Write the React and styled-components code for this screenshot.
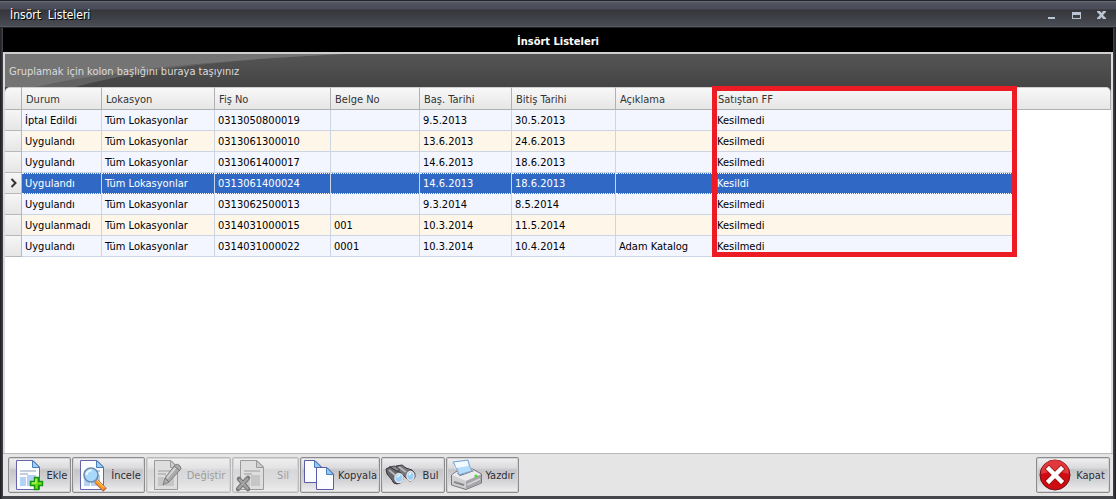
import React from "react";
import styled, { createGlobalStyle, css } from "styled-components";

const GlobalStyle = createGlobalStyle`
  * { box-sizing: border-box; }
  body {
    margin: 0;
    font-family: Tahoma, "DejaVu Sans Condensed", "Noto Sans", sans-serif;
    font-size: 11px;
    line-height: 14px;
    color: #000;
  }
  button { font: inherit; }
`;

const Window = styled.div`
  display: flex;
  flex-direction: column;
  min-height: 100vh;
  padding: 0 3px 3px;
  background: linear-gradient(90deg, #1c1d21, #44464c 3px, #44464c calc(100% - 3px), #1c1d21);
`;

const TitleBar = styled.header`
  display: flex;
  align-items: center;
  justify-content: space-between;
  height: 28px;
  margin: 0 -3px;
  padding: 1px 7px 0 10px;
  border-top: 1px solid #23242b;
  border-bottom: 1px solid #23242b;
  background: linear-gradient(#6c6e78 0, #50525f 2px, #4a4b58 8px, #35363a 9px, #4a4c54 25px, #666872 26px);
`;

const WindowTitle = styled.span`
  color: #fff;
  font-size: 12px;
  white-space: pre;
  text-shadow: 1px 1px 0 #000;
`;

const WindowControls = styled.div`
  display: flex;
  gap: 9px;
`;

const WindowButton = styled.button`
  display: flex;
  width: 16px;
  height: 16px;
  padding: 0;
  border: 0;
  background: none;
`;

const Banner = styled.h1`
  height: 24px;
  margin: 0;
  background: #000;
  color: #fff;
  font-size: 11px;
  font-weight: bold;
  line-height: 27px;
  text-align: center;
`;

const GridPanel = styled.main`
  flex: 1;
  display: flex;
  flex-direction: column;
  border: 2px solid #dcdada;
  border-top-color: #d0cdcd;
  border-bottom: 0;
  background: #fff;
`;

const GroupPanel = styled.div`
  position: relative;
  height: 33px;
  padding: 0 4px;
  background: linear-gradient(#555, #444);
  color: #dcdcdc;
  line-height: 36px;
`;

const GroupShine = styled.svg`
  position: absolute;
  inset: 0 auto auto 0;
`;

const GroupHint = styled.span`
  position: relative;
`;

const TableWrap = styled.div`
  position: relative;
  background: linear-gradient(#444, #444) top / 100% 8px no-repeat;
`;

const Table = styled.table`
  width: 100%;
  table-layout: fixed;
  border-collapse: separate;
  border-spacing: 0;
`;

const HeadCell = styled.th`
  height: 23px;
  padding: 2px 4px 0;
  border: solid #b0b0b0;
  border-width: 1px 1px 1px 0;
  border-top-color: #cfcfcf;
  background: linear-gradient(#f8f8f8, #e6e6e6);
  color: #333;
  font-weight: normal;
  text-align: left;
  white-space: nowrap;
  &:first-child { border-top-left-radius: 5px; }
  &:last-child { border-top-right-radius: 5px; }
`;

const Indicator = styled.td`
  height: 21px;
  padding: 0 0 0 5px;
  border: solid #b8b8b8;
  border-width: 0 1px 1px 0;
  background: linear-gradient(#f6f6f6, #e6e6e6);
  svg { display: block; }
`;

const Cell = styled.td`
  height: 21px;
  padding: 2px 3px 0;
  border: solid #cbd5e4;
  border-width: 0 1px 1px 0;
  white-space: nowrap;
`;

const Filler = styled.td`
  padding: 0;
  background: #fff;
`;

const Row = styled.tr`
  ${Cell} {
    background: ${(p) => (p.$alternate ? "#fff6ea" : "#f3f5ff")};
  }
  ${(p) =>
    p.$selected &&
    css`
      ${Cell} {
        padding-top: 0;
        background: #3069c5;
        color: #fff;
        border-top: 1px dotted #fff;
        border-bottom: 1px dotted #fff;
      }
    `}
`;

const Highlight = styled.div`
  position: absolute;
  top: -1px;
  bottom: 0;
  left: 707px;
  width: 305px;
  border: 5px solid #ed1c24;
  pointer-events: none;
`;

const Toolbar = styled.footer`
  display: flex;
  gap: 1px;
  padding: 3px 3px 3px 5px;
  border-top: 1px solid #b8b8b8;
  background: #e5e5e5;
`;

const Spacer = styled.div`
  flex: 1;
`;

const ToolButton = styled.button`
  display: flex;
  align-items: center;
  width: ${(p) => p.$width}px;
  height: 36px;
  padding: 0;
  border: 1px solid #8c8c8f;
  border-radius: 2px;
  background: linear-gradient(#f0f0f1, #dadadc 10px, #c5c5c8 12px, #d6d6d8 24px, #f0f0f1);
  box-shadow: inset 0 0 0 1px #d4d4d6;
  color: #2c2c36;
  &:disabled {
    border-color: #bababc;
    background: linear-gradient(#f0f0f0, #e3e3e4 10px, #d7d7d9 12px, #dfdfe0 24px, #eee);
    color: #9c9c9c;
  }
  svg { flex: none; margin: -1px 0 -1px -1px; }
`;

const ToolLabel = styled.span`
  flex: 1;
  padding-top: 2px;
  text-align: center;
`;

const Icon = ({ children }) => (
  <svg width="36" height="36" viewBox="0 0 36 36" aria-hidden="true">
    {children}
  </svg>
);

const Page = ({ gray }) => {
  const line = gray ? "#9b9b9b" : "#6767a8";
  return (
    <g>
      <path d="M8.500 3.500H25L31.500 10V32.500H8.500Z" fill={gray ? "#dedede" : "#fbfcff"} stroke={line} />
      <path d="M24.500 3.500V10.500H31.500Z" fill={gray ? "#ccc" : "#9ed0f7"} stroke={gray ? line : "#4a7dba"} />
      <path d="M12 14h16M12 17h8" stroke={gray ? "#bdbdbd" : "#c3cddb"} strokeWidth="2" />
      <path d="M12 20h6v9h-6zM19 18h9v11h-9z" fill={gray ? "#c6c6c6" : "#b4d3f4"} />
    </g>
  );
};

const AddIcon = () => (
  <Icon>
    <Page />
    <path d="M26.500 20.500h4v4h4v4h-4v4h-4v-4h-4v-4h4z" fill="#70e018" stroke="#15940f" strokeWidth="1.400" />
    <path d="M28 22v4h-4" fill="none" stroke="#c6ff80" />
  </Icon>
);

const InspectIcon = () => (
  <Icon>
    <Page />
    <path d="M24 24l9 9" stroke="#b96745" strokeWidth="5" />
    <path d="M24 24l8 8" stroke="#ff9a24" strokeWidth="3" />
    <path d="M24.500 22.500l8 8" stroke="#ffd875" />
    <circle cx="19" cy="18" r="7" fill="#a8d8fa" stroke="#6c8dad" strokeWidth="1.600" />
    <path d="M14.500 18a4.500 4.500 0 0 1 5-4.500" fill="none" stroke="#effaff" strokeWidth="2" />
  </Icon>
);

const EditIcon = () => (
  <Icon>
    <Page gray />
    <path d="M17 28l2-7L29 8q3-2 5 1t0 4L23 25z" fill="#aaa" stroke="#808080" />
    <path d="M21 21L30 10" stroke="#d0d0d0" strokeWidth="2" />
    <path d="M28 9l5 4M19 21l4 4" stroke="#777" />
  </Icon>
);

const DeleteIcon = () => (
  <Icon>
    <Page gray />
    <path d="M7 22l9 10M16 21L6 32" stroke="#777" strokeWidth="4.500" strokeLinecap="round" />
    <path d="M7 22l9 10M16 21L6 32" stroke="#a2a2a2" strokeWidth="2.500" />
  </Icon>
);

const CopyIcon = () => (
  <Icon>
    {[[4, 3], [16, 10]].map(([x, y]) => (
      <g key={x} transform={`translate(${x} ${y})`}>
        <path d="M.5.500H11L17.500 7V22.500H.5Z" fill="#fbfcff" stroke="#5b5ba8" />
        <path d="M10.500.500V7.500H17.500Z" fill="#8fcaf5" stroke="#4a7dba" />
      </g>
    ))}
  </Icon>
);

const FindIcon = () => (
  <Icon>
    <path d="M15 9l6-1 4 3 6 2q4 3 3 7-2 5-6 4l-6-6-6-4z" fill="#77777b" stroke="#3a3a3e" />
    <path d="M18 10l7 5" stroke="#b9b9bd" strokeWidth="2" />
    <path d="M8 10l6-1 5 4-6 3z" fill="#8b8b8f" stroke="#4a4a4e" />
    <path d="M5 12l4-2 5 3 6 3q3 3 2 7-2 4-6 4-4 0-5-4l-5-6z" fill="#68686c" stroke="#37373b" />
    <path d="M8 13l6 5" stroke="#b4b4b8" strokeWidth="2" />
    <ellipse cx="18" cy="21" rx="4" ry="4.500" fill="#9acffa" stroke="#e3e3e8" strokeWidth="1.500" />
    <ellipse cx="29.500" cy="19" rx="3.500" ry="4.500" fill="#9acffa" stroke="#e3e3e8" strokeWidth="1.500" />
    <path d="M16 20l3-2M28 18l2-2" stroke="#effaff" strokeWidth="1.500" />
  </Icon>
);

const PrintIcon = () => (
  <Icon>
    <path d="M5.500 18l7-5 14-1 9 5v9L20 32.500 5.500 28z" fill="#cfcfd1" stroke="#77777a" />
    <path d="M6 18l7-4.500 13-1 9 5L20 24z" fill="#ececee" />
    <path d="M20 24v8l15-6.500V17.500z" fill="#a5a5a9" />
    <path d="M11 16l14-3 3 1-14 5z" fill="#66666a" />
    <path d="M7 5l15-2q1 6 4 11l-13 4Q11 10 7 5z" fill="#b3dcfb" stroke="#7ca3cf" />
    <path d="M8.500 5.500l13-1.500 1 5-12 2z" fill="#f3faff" />
    <path d="M8 25l10 3" stroke="#8a8a8e" strokeWidth="2" />
    <path d="M21 28l13-6" stroke="#d6d6d9" strokeWidth="1.500" />
    <circle cx="30" cy="19" r="1.600" fill="#4fd62f" />
  </Icon>
);

const CloseIcon = () => (
  <Icon>
    <circle cx="19" cy="18" r="15" fill="#cf0c12" stroke="#6e1114" />
    <path d="M5 17a14 14 0 0 1 28 0q-14-5-28 0z" fill="#e0383c" />
    <path d="M13 12l12 12M25 12L13 24" stroke="#8f1013" strokeWidth="6" strokeLinecap="square" />
    <path d="M13 12l12 12M25 12L13 24" stroke="#fff" strokeWidth="4.500" strokeLinecap="square" />
  </Icon>
);

const columns = [
  ["Durum", 80],
  ["Lokasyon", 113],
  ["Fiş No", 116],
  ["Belge No", 89],
  ["Baş. Tarihi", 92],
  ["Bitiş Tarihi", 104],
  ["Açıklama", 98],
  ["Satıştan FF", 303],
];

const rows = [
  ["İptal Edildi", "0313050800019", "", "9.5.2013", "30.5.2013", "", "Kesilmedi"],
  ["Uygulandı", "0313061300010", "", "13.6.2013", "24.6.2013", "", "Kesilmedi"],
  ["Uygulandı", "0313061400017", "", "14.6.2013", "18.6.2013", "", "Kesilmedi"],
  ["Uygulandı", "0313061400024", "", "14.6.2013", "18.6.2013", "", "Kesildi"],
  ["Uygulandı", "0313062500013", "", "9.3.2014", "8.5.2014", "", "Kesilmedi"],
  ["Uygulanmadı", "0314031000015", "001", "10.3.2014", "11.5.2014", "", "Kesilmedi"],
  ["Uygulandı", "0314031000022", "0001", "10.3.2014", "10.4.2014", "Adam Katalog", "Kesilmedi"],
].map(([status, ...rest]) => [status, "Tüm Lokasyonlar", ...rest]);

const selectedRow = 3;

const actions = [
  { label: "Ekle", icon: AddIcon, width: 63 },
  { label: "İncele", icon: InspectIcon, width: 73 },
  { label: "Değiştir", icon: EditIcon, width: 85, disabled: true },
  { label: "Sil", icon: DeleteIcon, width: 67, disabled: true },
  { label: "Kopyala", icon: CopyIcon, width: 80 },
  { label: "Bul", icon: FindIcon, width: 64 },
  { label: "Yazdır", icon: PrintIcon, width: 73 },
];

export default function App() {
  return (
    <Window>
      <GlobalStyle />
      <TitleBar>
        <WindowTitle>{"İnsört  Listeleri"}</WindowTitle>
        <WindowControls>
          <WindowButton aria-label="Simge durumuna küçült">
            <svg width="16" height="16"><path d="M5 10h7v2H5z" fill="#b9c5d0" /></svg>
          </WindowButton>
          <WindowButton aria-label="Ekranı kapla">
            <svg width="16" height="16"><path fillRule="evenodd" d="M4 5h9v7H4zM5 8v3h7V8z" fill="#b9c5d0" /></svg>
          </WindowButton>
          <WindowButton aria-label="Pencereyi kapat">
            <svg width="16" height="16"><path d="M4 4h3l1.500 2L10 4h3v1l-3 3 3 3v1h-3l-1.500-2L7 12H4v-1l3-3-3-3z" fill="#b9c5d0" /></svg>
          </WindowButton>
        </WindowControls>
      </TitleBar>
      <Banner>İnsört Listeleri</Banner>
      <GridPanel>
        <GroupPanel>
          <GroupShine width="360" height="33" aria-hidden="true">
            <path d="M0 0H340Q160 8 70 33H0Z" fill="#626262" />
            <path d="M0 0H340Q130 10 30 33H0Z" fill="#747474" />
          </GroupShine>
          <GroupHint>Gruplamak için kolon başlığını buraya taşıyınız</GroupHint>
        </GroupPanel>
        <TableWrap>
          <Table>
            <colgroup>
              <col style={{ width: 17 }} />
              {columns.map(([name, width]) => (
                <col key={name} style={{ width }} />
              ))}
              <col />
            </colgroup>
            <thead>
              <tr>
                <HeadCell />
                {columns.map(([name]) => (
                  <HeadCell key={name} scope="col">{name}</HeadCell>
                ))}
                <HeadCell />
              </tr>
            </thead>
            <tbody>
              {rows.map((row, i) => (
                <Row key={row[2]} $alternate={i % 2 === 1} $selected={i === selectedRow}>
                  <Indicator>
                    {i === selectedRow && (
                      <svg width="8" height="10" aria-hidden="true">
                        <path d="M1.500 1l4 4-4 4" fill="none" stroke="#333" strokeWidth="2" />
                      </svg>
                    )}
                  </Indicator>
                  {row.map((value, c) => (
                    <Cell key={c}>{value}</Cell>
                  ))}
                  <Filler />
                </Row>
              ))}
            </tbody>
          </Table>
          <Highlight />
        </TableWrap>
      </GridPanel>
      <Toolbar>
        {actions.map(({ label, icon: Glyph, width, disabled }) => (
          <ToolButton key={label} $width={width} disabled={disabled}>
            <Glyph />
            <ToolLabel>{label}</ToolLabel>
          </ToolButton>
        ))}
        <Spacer />
        <ToolButton $width={74}>
          <CloseIcon />
          <ToolLabel>Kapat</ToolLabel>
        </ToolButton>
      </Toolbar>
    </Window>
  );
}
